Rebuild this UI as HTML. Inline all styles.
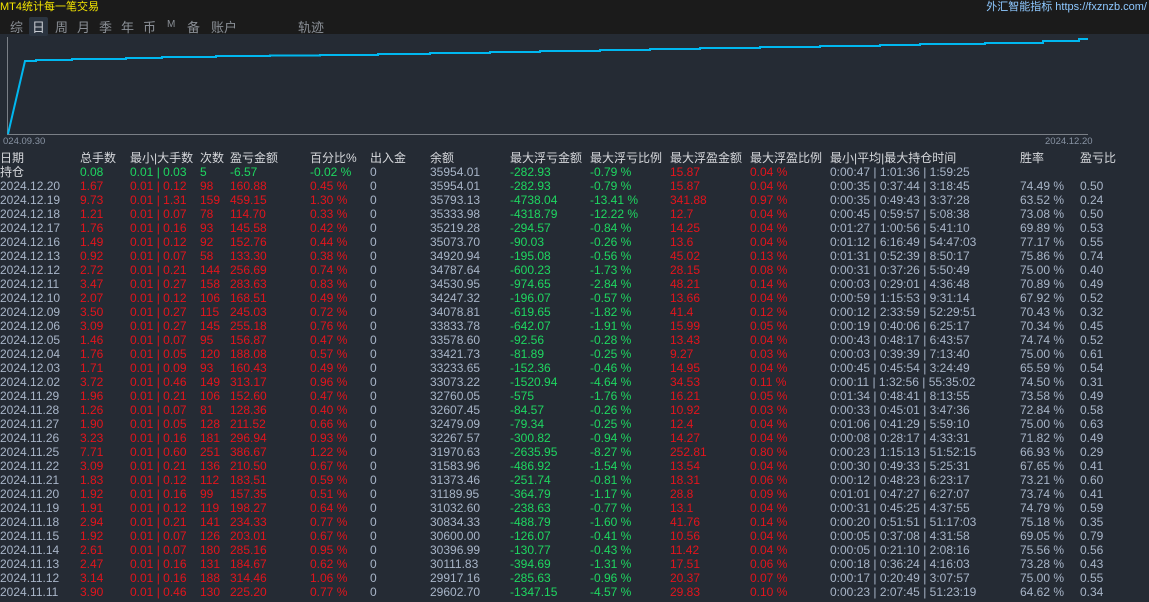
<!DOCTYPE html>
<html><head><meta charset="utf-8">
<style>
*{margin:0;padding:0;box-sizing:border-box}
body{width:1149px;height:602px;overflow:hidden;background:#252b34;font-family:"Liberation Sans","Noto Sans CJK SC",sans-serif;position:relative}
#top{position:absolute;left:0;top:0;width:1149px;height:34px;background:#1b1b1b}
#title{position:absolute;left:0;top:-2px;color:#f5e600;font-size:11px}
#site{position:absolute;right:2px;top:-2px;color:#8ec8ff;font-size:11px}
.tab{position:absolute;top:17px;color:#8a8f96;font-size:13px}
.tabsel{background:#2b3440;color:#c8ccd2;padding:0 3px;border-radius:2px}
.lbl{position:absolute;top:136px;color:#8893a3;font-size:9.5px}
.r{position:absolute;left:0;height:14px;display:flex;font-size:12px;line-height:14px;white-space:nowrap;color:#a8b5c8}
.r span{display:block;flex:none;overflow:visible}
.r span:nth-child(1){width:80px}
.r span:nth-child(2){width:50px}
.r span:nth-child(3){width:70px}
.r span:nth-child(4){width:30px}
.r span:nth-child(5){width:80px}
.r span:nth-child(6){width:60px}
.r span:nth-child(7){width:60px}
.r span:nth-child(8){width:80px}
.r span:nth-child(9){width:80px}
.r span:nth-child(10){width:80px}
.r span:nth-child(11){width:80px}
.r span:nth-child(12){width:80px}
.r span:nth-child(13){width:190px}
.r span:nth-child(14){width:60px}
.h{color:#d6d8dc;font-size:12px}
.d span:nth-child(2),.d span:nth-child(3),.d span:nth-child(4),.d span:nth-child(5),.d span:nth-child(6),.d span:nth-child(11),.d span:nth-child(12){color:#e3141c}
.d span:nth-child(9),.d span:nth-child(10){color:#1ed760}
.d span:nth-child(1){color:#a8b5c8}
.g span:nth-child(2),.g span:nth-child(3),.g span:nth-child(4),.g span:nth-child(5),.g span:nth-child(6),.g span:nth-child(9),.g span:nth-child(10){color:#1ed760}
.g span:nth-child(11),.g span:nth-child(12){color:#e3141c}
.g span:nth-child(1){color:#d6d8dc;font-size:12px}
</style></head><body>
<div id="top"></div>
<div id="title">MT4统计每一笔交易</div>
<div id="site">外汇智能指标 https://fxznzb.com/</div>
<div class="tab" style="left:10px">综</div>
<div class="tab tabsel" style="left:29px">日</div>
<div class="tab" style="left:55px">周</div>
<div class="tab" style="left:77px">月</div>
<div class="tab" style="left:99px">季</div>
<div class="tab" style="left:121px">年</div>
<div class="tab" style="left:143px">币</div>
<div class="tab" style="left:167px;font-size:10px;top:19px">M</div>
<div class="tab" style="left:187px">备</div>
<div class="tab" style="left:211px">账户</div>
<div class="tab" style="left:298px">轨迹</div>
<svg style="position:absolute;left:0;top:0" width="1149" height="140">
<line x1="7.5" y1="37" x2="7.5" y2="134" stroke="#7a7f86" stroke-width="1"/>
<line x1="7" y1="134.5" x2="1088" y2="134.5" stroke="#7a7f86" stroke-width="1"/>
<polyline fill="none" stroke="#00b8f0" stroke-width="2" points="8,134 25,61 36,61 36,60 72,60 72,59 126,59 126,58 162,58 162,57 216,57 216,56 270,56 270,55.5 320,55.5 320,55 378,55 378,54 430,54 430,53 490,53 490,52 540,52 540,51 600,51 600,50 650,50 650,49 700,49 700,48 760,48 760,47 820,47 820,46 880,46 880,45 920,45 920,44 985,44 985,43 1043,43 1043,41 1079,41 1079,39 1088,39"/>
</svg>
<div class="lbl" style="left:3px">024.09.30</div>
<div class="lbl" style="left:1045px">2024.12.20</div>

<div class="r h" style="top:151px"><span>日期</span><span>总手数</span><span>最小|大手数</span><span>次数</span><span>盈亏金额</span><span>百分比%</span><span>出入金</span><span>余额</span><span>最大浮亏金额</span><span>最大浮亏比例</span><span>最大浮盈金额</span><span>最大浮盈比例</span><span>最小|平均|最大持仓时间</span><span>胜率</span><span>盈亏比</span></div>
<div class="r g" style="top:165px"><span>持仓</span><span>0.08</span><span>0.01 | 0.03</span><span>5</span><span>-6.57</span><span>-0.02 %</span><span>0</span><span>35954.01</span><span>-282.93</span><span>-0.79 %</span><span>15.87</span><span>0.04 %</span><span>0:00:47 | 1:01:36 | 1:59:25</span><span></span><span></span></div>
<div class="r d" style="top:179px"><span>2024.12.20</span><span>1.67</span><span>0.01 | 0.12</span><span>98</span><span>160.88</span><span>0.45 %</span><span>0</span><span>35954.01</span><span>-282.93</span><span>-0.79 %</span><span>15.87</span><span>0.04 %</span><span>0:00:35 | 0:37:44 | 3:18:45</span><span>74.49 %</span><span>0.50</span></div>
<div class="r d" style="top:193px"><span>2024.12.19</span><span>9.73</span><span>0.01 | 1.31</span><span>159</span><span>459.15</span><span>1.30 %</span><span>0</span><span>35793.13</span><span>-4738.04</span><span>-13.41 %</span><span>341.88</span><span>0.97 %</span><span>0:00:35 | 0:49:43 | 3:37:28</span><span>63.52 %</span><span>0.24</span></div>
<div class="r d" style="top:207px"><span>2024.12.18</span><span>1.21</span><span>0.01 | 0.07</span><span>78</span><span>114.70</span><span>0.33 %</span><span>0</span><span>35333.98</span><span>-4318.79</span><span>-12.22 %</span><span>12.7</span><span>0.04 %</span><span>0:00:45 | 0:59:57 | 5:08:38</span><span>73.08 %</span><span>0.50</span></div>
<div class="r d" style="top:221px"><span>2024.12.17</span><span>1.76</span><span>0.01 | 0.16</span><span>93</span><span>145.58</span><span>0.42 %</span><span>0</span><span>35219.28</span><span>-294.57</span><span>-0.84 %</span><span>14.25</span><span>0.04 %</span><span>0:01:27 | 1:00:56 | 5:41:10</span><span>69.89 %</span><span>0.53</span></div>
<div class="r d" style="top:235px"><span>2024.12.16</span><span>1.49</span><span>0.01 | 0.12</span><span>92</span><span>152.76</span><span>0.44 %</span><span>0</span><span>35073.70</span><span>-90.03</span><span>-0.26 %</span><span>13.6</span><span>0.04 %</span><span>0:01:12 | 6:16:49 | 54:47:03</span><span>77.17 %</span><span>0.55</span></div>
<div class="r d" style="top:249px"><span>2024.12.13</span><span>0.92</span><span>0.01 | 0.07</span><span>58</span><span>133.30</span><span>0.38 %</span><span>0</span><span>34920.94</span><span>-195.08</span><span>-0.56 %</span><span>45.02</span><span>0.13 %</span><span>0:01:31 | 0:52:39 | 8:50:17</span><span>75.86 %</span><span>0.74</span></div>
<div class="r d" style="top:263px"><span>2024.12.12</span><span>2.72</span><span>0.01 | 0.21</span><span>144</span><span>256.69</span><span>0.74 %</span><span>0</span><span>34787.64</span><span>-600.23</span><span>-1.73 %</span><span>28.15</span><span>0.08 %</span><span>0:00:31 | 0:37:26 | 5:50:49</span><span>75.00 %</span><span>0.40</span></div>
<div class="r d" style="top:277px"><span>2024.12.11</span><span>3.47</span><span>0.01 | 0.27</span><span>158</span><span>283.63</span><span>0.83 %</span><span>0</span><span>34530.95</span><span>-974.65</span><span>-2.84 %</span><span>48.21</span><span>0.14 %</span><span>0:00:03 | 0:29:01 | 4:36:48</span><span>70.89 %</span><span>0.49</span></div>
<div class="r d" style="top:291px"><span>2024.12.10</span><span>2.07</span><span>0.01 | 0.12</span><span>106</span><span>168.51</span><span>0.49 %</span><span>0</span><span>34247.32</span><span>-196.07</span><span>-0.57 %</span><span>13.66</span><span>0.04 %</span><span>0:00:59 | 1:15:53 | 9:31:14</span><span>67.92 %</span><span>0.52</span></div>
<div class="r d" style="top:305px"><span>2024.12.09</span><span>3.50</span><span>0.01 | 0.27</span><span>115</span><span>245.03</span><span>0.72 %</span><span>0</span><span>34078.81</span><span>-619.65</span><span>-1.82 %</span><span>41.4</span><span>0.12 %</span><span>0:00:12 | 2:33:59 | 52:29:51</span><span>70.43 %</span><span>0.32</span></div>
<div class="r d" style="top:319px"><span>2024.12.06</span><span>3.09</span><span>0.01 | 0.27</span><span>145</span><span>255.18</span><span>0.76 %</span><span>0</span><span>33833.78</span><span>-642.07</span><span>-1.91 %</span><span>15.99</span><span>0.05 %</span><span>0:00:19 | 0:40:06 | 6:25:17</span><span>70.34 %</span><span>0.45</span></div>
<div class="r d" style="top:333px"><span>2024.12.05</span><span>1.46</span><span>0.01 | 0.07</span><span>95</span><span>156.87</span><span>0.47 %</span><span>0</span><span>33578.60</span><span>-92.56</span><span>-0.28 %</span><span>13.43</span><span>0.04 %</span><span>0:00:43 | 0:48:17 | 6:43:57</span><span>74.74 %</span><span>0.52</span></div>
<div class="r d" style="top:347px"><span>2024.12.04</span><span>1.76</span><span>0.01 | 0.05</span><span>120</span><span>188.08</span><span>0.57 %</span><span>0</span><span>33421.73</span><span>-81.89</span><span>-0.25 %</span><span>9.27</span><span>0.03 %</span><span>0:00:03 | 0:39:39 | 7:13:40</span><span>75.00 %</span><span>0.61</span></div>
<div class="r d" style="top:361px"><span>2024.12.03</span><span>1.71</span><span>0.01 | 0.09</span><span>93</span><span>160.43</span><span>0.49 %</span><span>0</span><span>33233.65</span><span>-152.36</span><span>-0.46 %</span><span>14.95</span><span>0.04 %</span><span>0:00:45 | 0:45:54 | 3:24:49</span><span>65.59 %</span><span>0.54</span></div>
<div class="r d" style="top:375px"><span>2024.12.02</span><span>3.72</span><span>0.01 | 0.46</span><span>149</span><span>313.17</span><span>0.96 %</span><span>0</span><span>33073.22</span><span>-1520.94</span><span>-4.64 %</span><span>34.53</span><span>0.11 %</span><span>0:00:11 | 1:32:56 | 55:35:02</span><span>74.50 %</span><span>0.31</span></div>
<div class="r d" style="top:389px"><span>2024.11.29</span><span>1.96</span><span>0.01 | 0.21</span><span>106</span><span>152.60</span><span>0.47 %</span><span>0</span><span>32760.05</span><span>-575</span><span>-1.76 %</span><span>16.21</span><span>0.05 %</span><span>0:01:34 | 0:48:41 | 8:13:55</span><span>73.58 %</span><span>0.49</span></div>
<div class="r d" style="top:403px"><span>2024.11.28</span><span>1.26</span><span>0.01 | 0.07</span><span>81</span><span>128.36</span><span>0.40 %</span><span>0</span><span>32607.45</span><span>-84.57</span><span>-0.26 %</span><span>10.92</span><span>0.03 %</span><span>0:00:33 | 0:45:01 | 3:47:36</span><span>72.84 %</span><span>0.58</span></div>
<div class="r d" style="top:417px"><span>2024.11.27</span><span>1.90</span><span>0.01 | 0.05</span><span>128</span><span>211.52</span><span>0.66 %</span><span>0</span><span>32479.09</span><span>-79.34</span><span>-0.25 %</span><span>12.4</span><span>0.04 %</span><span>0:01:06 | 0:41:29 | 5:59:10</span><span>75.00 %</span><span>0.63</span></div>
<div class="r d" style="top:431px"><span>2024.11.26</span><span>3.23</span><span>0.01 | 0.16</span><span>181</span><span>296.94</span><span>0.93 %</span><span>0</span><span>32267.57</span><span>-300.82</span><span>-0.94 %</span><span>14.27</span><span>0.04 %</span><span>0:00:08 | 0:28:17 | 4:33:31</span><span>71.82 %</span><span>0.49</span></div>
<div class="r d" style="top:445px"><span>2024.11.25</span><span>7.71</span><span>0.01 | 0.60</span><span>251</span><span>386.67</span><span>1.22 %</span><span>0</span><span>31970.63</span><span>-2635.95</span><span>-8.27 %</span><span>252.81</span><span>0.80 %</span><span>0:00:23 | 1:15:13 | 51:52:15</span><span>66.93 %</span><span>0.29</span></div>
<div class="r d" style="top:459px"><span>2024.11.22</span><span>3.09</span><span>0.01 | 0.21</span><span>136</span><span>210.50</span><span>0.67 %</span><span>0</span><span>31583.96</span><span>-486.92</span><span>-1.54 %</span><span>13.54</span><span>0.04 %</span><span>0:00:30 | 0:49:33 | 5:25:31</span><span>67.65 %</span><span>0.41</span></div>
<div class="r d" style="top:473px"><span>2024.11.21</span><span>1.83</span><span>0.01 | 0.12</span><span>112</span><span>183.51</span><span>0.59 %</span><span>0</span><span>31373.46</span><span>-251.74</span><span>-0.81 %</span><span>18.31</span><span>0.06 %</span><span>0:00:12 | 0:48:23 | 6:23:17</span><span>73.21 %</span><span>0.60</span></div>
<div class="r d" style="top:487px"><span>2024.11.20</span><span>1.92</span><span>0.01 | 0.16</span><span>99</span><span>157.35</span><span>0.51 %</span><span>0</span><span>31189.95</span><span>-364.79</span><span>-1.17 %</span><span>28.8</span><span>0.09 %</span><span>0:01:01 | 0:47:27 | 6:27:07</span><span>73.74 %</span><span>0.41</span></div>
<div class="r d" style="top:501px"><span>2024.11.19</span><span>1.91</span><span>0.01 | 0.12</span><span>119</span><span>198.27</span><span>0.64 %</span><span>0</span><span>31032.60</span><span>-238.63</span><span>-0.77 %</span><span>13.1</span><span>0.04 %</span><span>0:00:31 | 0:45:25 | 4:37:55</span><span>74.79 %</span><span>0.59</span></div>
<div class="r d" style="top:515px"><span>2024.11.18</span><span>2.94</span><span>0.01 | 0.21</span><span>141</span><span>234.33</span><span>0.77 %</span><span>0</span><span>30834.33</span><span>-488.79</span><span>-1.60 %</span><span>41.76</span><span>0.14 %</span><span>0:00:20 | 0:51:51 | 51:17:03</span><span>75.18 %</span><span>0.35</span></div>
<div class="r d" style="top:529px"><span>2024.11.15</span><span>1.92</span><span>0.01 | 0.07</span><span>126</span><span>203.01</span><span>0.67 %</span><span>0</span><span>30600.00</span><span>-126.07</span><span>-0.41 %</span><span>10.56</span><span>0.04 %</span><span>0:00:05 | 0:37:08 | 4:31:58</span><span>69.05 %</span><span>0.79</span></div>
<div class="r d" style="top:543px"><span>2024.11.14</span><span>2.61</span><span>0.01 | 0.07</span><span>180</span><span>285.16</span><span>0.95 %</span><span>0</span><span>30396.99</span><span>-130.77</span><span>-0.43 %</span><span>11.42</span><span>0.04 %</span><span>0:00:05 | 0:21:10 | 2:08:16</span><span>75.56 %</span><span>0.56</span></div>
<div class="r d" style="top:557px"><span>2024.11.13</span><span>2.47</span><span>0.01 | 0.16</span><span>131</span><span>184.67</span><span>0.62 %</span><span>0</span><span>30111.83</span><span>-394.69</span><span>-1.31 %</span><span>17.51</span><span>0.06 %</span><span>0:00:18 | 0:36:24 | 4:16:03</span><span>73.28 %</span><span>0.43</span></div>
<div class="r d" style="top:571px"><span>2024.11.12</span><span>3.14</span><span>0.01 | 0.16</span><span>188</span><span>314.46</span><span>1.06 %</span><span>0</span><span>29917.16</span><span>-285.63</span><span>-0.96 %</span><span>20.37</span><span>0.07 %</span><span>0:00:17 | 0:20:49 | 3:07:57</span><span>75.00 %</span><span>0.55</span></div>
<div class="r d" style="top:585px"><span>2024.11.11</span><span>3.90</span><span>0.01 | 0.46</span><span>130</span><span>225.20</span><span>0.77 %</span><span>0</span><span>29602.70</span><span>-1347.15</span><span>-4.57 %</span><span>29.83</span><span>0.10 %</span><span>0:00:23 | 2:07:45 | 51:23:19</span><span>64.62 %</span><span>0.34</span></div>
</body></html>
